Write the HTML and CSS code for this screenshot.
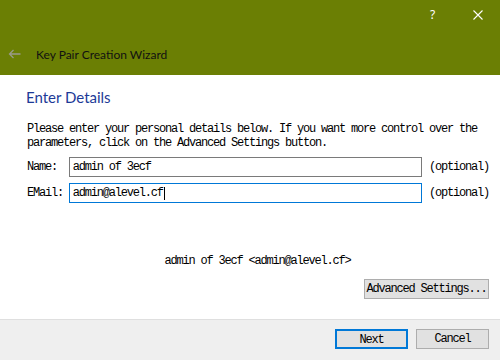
FILE: index.html
```html
<!DOCTYPE html>
<html>
<head>
<meta charset="utf-8">
<link rel="stylesheet" href="styles.css">
</head>
<body>
<div class="window">
  <header class="header">
    <div class="caption">
      <div class="cap-btn help">?</div>
      <div class="cap-btn close">
        <svg width="10" height="10" viewBox="0 0 10 10"><path d="M0.5 0.5 L9.5 9.5 M9.5 0.5 L0.5 9.5" stroke="#fff" stroke-width="1.1" fill="none"/></svg>
      </div>
    </div>
    <div class="title-row">
      <svg class="back" width="13" height="10" viewBox="0 0 13 10"><path d="M12.5 5 H1.5 M5.5 1 L1.5 5 L5.5 9" stroke="#9a9a8a" stroke-width="1.3" fill="none"/></svg>
      <span class="title">Key Pair Creation Wizard</span>
    </div>
  </header>
  <main class="content">
    <h1 class="heading">Enter Details</h1>
    <p class="intro">Please enter your personal details below. If you want more control over the<br>parameters, click on the Advanced Settings button.</p>
    <div class="form">
      <div class="row">
        <span class="label">Name:</span>
        <div class="field">admin of 3ecf</div>
        <span class="opt">(optional)</span>
      </div>
      <div class="row">
        <span class="label">EMail:</span>
        <div class="field focus">admin@alevel.cf<span class="caret"></span></div>
        <span class="opt">(optional)</span>
      </div>
    </div>
    <div class="summary">admin of 3ecf &lt;admin@alevel.cf&gt;</div>
    <div class="adv-row"><button class="btn adv">Advanced Settings...</button></div>
  </main>
  <footer class="footer">
    <button class="btn primary">Next</button>
    <button class="btn">Cancel</button>
  </footer>
</div>
</body>
</html>
```
FILE: styles.css
```css
* { box-sizing: border-box; }
html, body { margin: 0; padding: 0; background: #fff; }
.window { width: 500px; height: 360px; display: flex; flex-direction: column; overflow: hidden; }
.header { height: 75px; background: #6b7f04; display: flex; flex-direction: column; }
.caption { height: 30px; display: flex; justify-content: flex-end; }
.cap-btn { width: 45px; height: 30px; display: flex; align-items: center; justify-content: center; color: #fff; font-family: "Noto Sans", sans-serif; font-size: 12px; }
.help { padding-bottom: 1px; }
.title-row { flex: 1; display: flex; align-items: center; padding: 3px 0 0 8px; }
.back { margin-right: 15px; }
.title { font-family: Lato, sans-serif; font-size: 12px; color: #111; }
.content { flex: 1; display: flex; flex-direction: column; padding: 0 11px 0 26px; }
.heading { margin: 12px 0 0 0; font-family: Lato, sans-serif; font-weight: normal; font-size: 15px; line-height: 20px; color: #1c3a97; }
.intro, .label, .field, .opt, .summary, .btn { font-family: "Liberation Mono", monospace; font-size: 12px; letter-spacing: -1.2px; color: #000; }
.intro { margin: 15px 0 0 1px; line-height: 14px; }
.form { margin-top: 7px; display: flex; flex-direction: column; gap: 6px; }
.row { display: flex; align-items: center; height: 20px; }
.label { width: 43px; padding-left: 1px; }
.field { width: 356px; height: 20px; border: 1px solid #7a7a7a; padding: 0 3px; line-height: 18px; display: flex; align-items: center; }
.field.focus { border-color: #0078d7; }
.caret { display: inline-block; width: 1px; height: 13px; background: #000; margin-left: 1px; }
.opt { margin-left: 7px; }
.summary { margin-top: 51px; text-align: center; line-height: 14px; }
.adv-row { margin-top: 11px; display: flex; justify-content: flex-end; }
.btn { height: 20px; background: #e1e1e1; border: 1px solid #adadad; padding: 0; margin: 0; line-height: 18px; }
.adv { width: 125px; }
.footer { height: 41px; background: #efefef; border-top: 1px solid #dfdfdf; display: flex; justify-content: flex-end; align-items: flex-start; gap: 8px; padding: 9px 11px 0 0; }
.footer .btn { width: 73px; }
.btn.primary { border: 2px solid #0078d7; }
```
